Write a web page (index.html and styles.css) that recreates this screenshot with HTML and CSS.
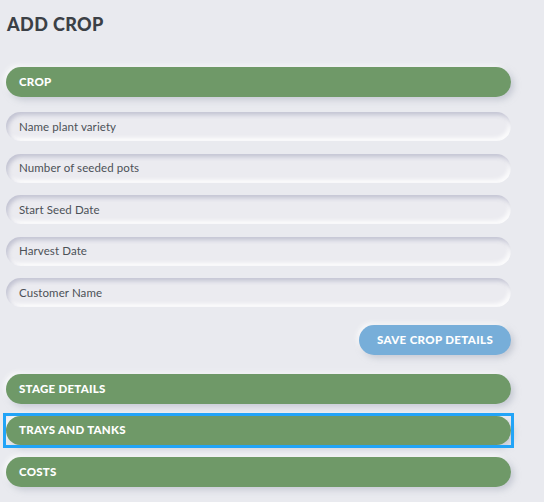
FILE: index.html
```html
<!DOCTYPE html>
<html>
<head>
<meta charset="utf-8">
<link rel="stylesheet" href="styles.css">
</head>
<body>
<div class="page">
  <h1 class="title">ADD CROP</h1>
  <div class="bar crop-bar">CROP</div>
  <div class="fields">
    <div class="field">Name plant variety</div>
    <div class="field">Number of seeded pots</div>
    <div class="field">Start Seed Date</div>
    <div class="field">Harvest Date</div>
    <div class="field">Customer Name</div>
  </div>
  <div class="actions">
    <button class="save">SAVE CROP DETAILS</button>
  </div>
  <div class="sections">
    <div class="bar">STAGE DETAILS</div>
    <div class="focus"><div class="bar">TRAYS AND TANKS</div></div>
    <div class="bar">COSTS</div>
  </div>
</div>
</body>
</html>
```

FILE: styles.css
```css
html, body {
  margin: 0;
  padding: 0;
  background: #e9eaef;
}
body {
  font-family: "Lato", "Open Sans", sans-serif;
  width: 544px;
  height: 502px;
  overflow: hidden;
}
.page {
  padding: 13px 0 0 6px;
  width: 505px;
}
.title {
  margin: 0 0 32px 1px;
  font-size: 18px;
  line-height: 22px;
  font-weight: 900;
  color: #3b4046;
  letter-spacing: 0.4px;
}
.bar {
  height: 29.5px;
  border-radius: 15px;
  background: #6f9968;
  color: #ffffff;
  font-weight: 900;
  font-size: 11.5px;
  display: flex;
  align-items: center;
  padding-left: 13px;
  padding-bottom: 1px;
  box-sizing: border-box;
  box-shadow: 3px 3px 6px rgba(170, 174, 190, 0.55), -2px -2px 5px rgba(255, 255, 255, 0.8);
  letter-spacing: 0.25px;
}
.crop-bar {
  height: 30px;
}
.fields {
  margin-top: 15px;
  display: flex;
  flex-direction: column;
  gap: 12.5px;
}
.field {
  height: 29px;
  border-radius: 15px;
  background: #ebebf0;
  color: #4c5157;
  font-size: 11.5px;
  letter-spacing: 0.1px;
  display: flex;
  align-items: center;
  padding-left: 13px;
  padding-bottom: 1px;
  box-sizing: border-box;
  box-shadow: inset 2px 3px 4px rgba(180, 182, 200, 0.75), inset -2px -3px 4px rgba(255, 255, 255, 0.9);
}
.actions {
  margin-top: 18px;
  display: flex;
  justify-content: flex-end;
}
.save {
  width: 152px;
  height: 30px;
  border: none;
  border-radius: 15px;
  background: #77aed9;
  color: #ffffff;
  font-family: inherit;
  font-weight: 900;
  font-size: 11.5px;
  letter-spacing: 0.35px;
  padding: 0 0 1px 0;
  box-shadow: 3px 3px 6px rgba(170, 174, 190, 0.55), -2px -2px 5px rgba(255, 255, 255, 0.8);
}
.sections {
  margin-top: 19px;
  display: flex;
  flex-direction: column;
  gap: 12px;
}
.focus {
  outline: 3px solid #22a4f7;
  outline-offset: 0;
}
```
